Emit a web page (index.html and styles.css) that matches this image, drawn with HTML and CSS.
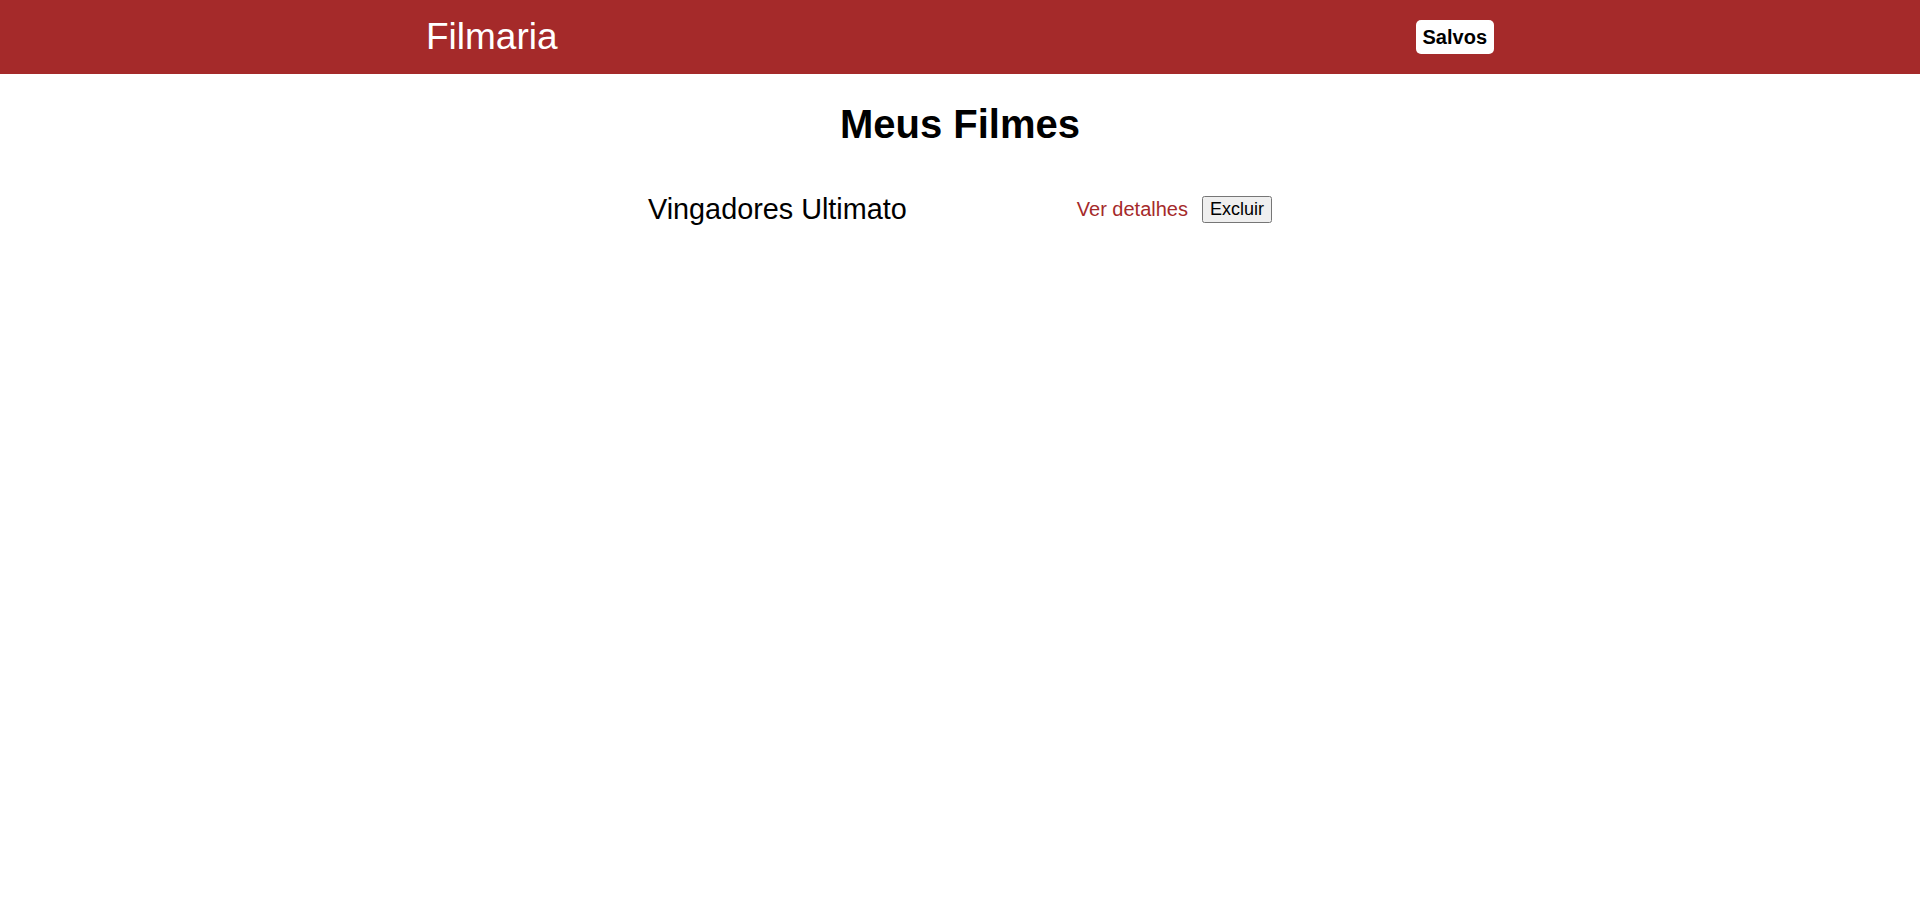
FILE: index.html
```html
<!DOCTYPE html>
<html lang="pt-BR">
<head>
<meta charset="utf-8">
<title>Filmaria</title>
<link rel="stylesheet" href="styles.css">
</head>
<body>
<header class="header">
  <div class="header-inner">
    <a class="logo" href="#">Filmaria</a>
    <a class="favoritos" href="#">Salvos</a>
  </div>
</header>
<main class="meus-filmes">
  <h1 class="title">Meus Filmes</h1>
  <ul class="lista">
    <li class="item">
      <span class="nome">Vingadores Ultimato</span>
      <div class="acoes">
        <a class="detalhes" href="#">Ver detalhes</a>
        <button class="excluir">Excluir</button>
      </div>
    </li>
  </ul>
</main>
</body>
</html>
```

FILE: styles.css
```css
* {
  box-sizing: border-box;
}

body {
  margin: 0;
  font-family: "Liberation Sans", Arial, sans-serif;
  background: #ffffff;
  color: #000000;
}

.header {
  height: 74px;
  background: #a52a2a;
  display: flex;
  align-items: center;
}

.header-inner {
  width: 1068px;
  margin: 0 auto;
  display: flex;
  justify-content: space-between;
  align-items: center;
}

.logo {
  color: #ffffff;
  font-size: 37px;
  text-decoration: none;
  line-height: 42px;
  margin-top: -1px;
}

.favoritos {
  background: #ffffff;
  color: #000000;
  font-size: 20px;
  font-weight: bold;
  text-decoration: none;
  line-height: 24px;
  padding: 5px 7px;
  border-radius: 5px;
}

.title {
  font-size: 40px;
  line-height: 46px;
  text-align: center;
  margin: 27px 0 0;
}

.lista {
  list-style: none;
  padding: 0;
  margin: 46px auto 0;
  width: 624px;
}

.item {
  display: flex;
  justify-content: space-between;
  align-items: center;
}

.nome {
  font-size: 28.8px;
}

.acoes {
  display: flex;
  align-items: center;
  gap: 14px;
}

.detalhes {
  color: #a52a2a;
  font-size: 20px;
  text-decoration: none;
}

.excluir {
  font-family: "Liberation Sans", Arial, sans-serif;
  font-size: 18px;
}
```
